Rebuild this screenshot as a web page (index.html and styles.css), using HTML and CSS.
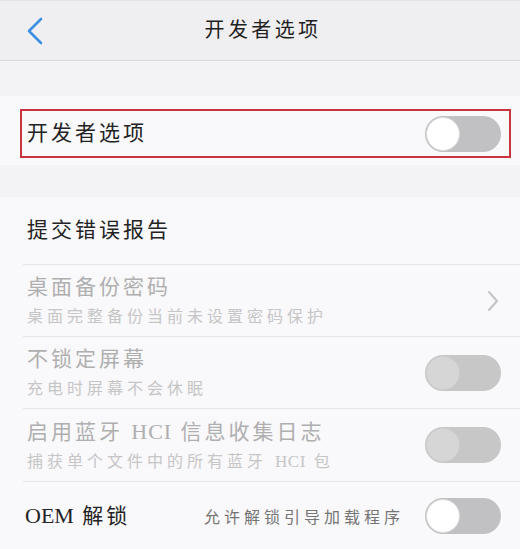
FILE: index.html
```html
<!DOCTYPE html>
<html lang="zh-CN">
<head>
<meta charset="utf-8">
<title>开发者选项</title>
<link rel="stylesheet" href="styles.css">
</head>
<body>
<div class="screen">
  <header class="topbar">
    <div class="back">
      <svg width="20" height="30" viewBox="0 0 20 30"><polyline points="15,3 3,15 15,27" fill="none" stroke="#3d8fe3" stroke-width="2.6" stroke-linecap="round" stroke-linejoin="round"/></svg>
    </div>
    <div class="title">开发者选项</div>
    <div class="spacer"></div>
  </header>
  <div class="band band-top"></div>
  <section class="master">
    <div class="master-box">
      <span class="label">开发者选项</span>
      <span class="switch"><span class="knob"></span></span>
    </div>
  </section>
  <div class="band band-mid"></div>
  <section class="list">
    <div class="item item-first">
      <span class="label">提交错误报告</span>
    </div>
    <div class="item item-two">
      <div class="texts disabled">
        <span class="label">桌面备份密码</span>
        <span class="sub">桌面完整备份当前未设置密码保护</span>
      </div>
      <svg class="chev" width="14" height="24" viewBox="0 0 14 24"><polyline points="3,3 11,12 3,21" fill="none" stroke="#c3c3c3" stroke-width="2" stroke-linecap="round" stroke-linejoin="round"/></svg>
    </div>
    <div class="item item-two">
      <div class="texts disabled">
        <span class="label">不锁定屏幕</span>
        <span class="sub">充电时屏幕不会休眠</span>
      </div>
      <span class="switch switch-off-disabled"><span class="knob"></span></span>
    </div>
    <div class="item item-two">
      <div class="texts disabled">
        <span class="label">启用蓝牙 <span class="latin-l">HCI</span> 信息收集日志</span>
        <span class="sub">捕获单个文件中的所有蓝牙 <span class="latin-s">HCI</span> 包</span>
      </div>
      <span class="switch switch-off-disabled"><span class="knob"></span></span>
    </div>
    <div class="item item-last">
      <span class="label"><span class="latin">OEM</span> 解锁</span>
      <span class="hint">允许解锁引导加载程序</span>
      <span class="switch"><span class="knob"></span></span>
    </div>
  </section>
</div>
</body>
</html>
```

FILE: styles.css
```css
html, body {
  margin: 0;
  padding: 0;
}
body {
  width: 520px;
  height: 549px;
  overflow: hidden;
  background: #f9f8fa;
  font-family: "Liberation Serif", "Noto Sans CJK SC", serif;
  color: #222;
}
.screen {
  display: flex;
  flex-direction: column;
  width: 520px;
  height: 549px;
}
.topbar {
  height: 59px;
  flex: none;
  display: grid;
  grid-template-columns: 80px 1fr 80px;
  align-items: center;
  background: #efeef0;
  border-bottom: 1px solid #d8d7d9;
  border-top: 1px solid #e4e4e6;
  box-sizing: content-box;
}
.back {
  padding-left: 26px;
  display: flex;
  align-items: center;
}
.title {
  text-align: center;
  font-size: 20px;
  letter-spacing: 3.4px;
  color: #1f1f1f;
  padding-left: 6px;
  margin-top: -4px;
}
.band {
  flex: none;
  background: #f3f2f4;
}
.band-top { height: 35px; }
.band-mid { height: 32px; }
.master {
  flex: none;
  background: #f9f8fa;
  padding: 13px 9px 7px 20px;
}
.master-box {
  height: 45px;
  border: 2px solid #c9343f;
  display: flex;
  align-items: center;
  justify-content: space-between;
  padding: 0 8px 0 5px;
}
.label {
  font-size: 21px;
  letter-spacing: 3px;
  line-height: 27px;
  color: #232323;
}
.latin {
  letter-spacing: 0;
  font-size: 22px;
}
.latin-l {
  letter-spacing: 1px;
  font-size: 22px;
}
.latin-s {
  letter-spacing: 0.5px;
  font-size: 17px;
}
.switch {
  flex: none;
  width: 76px;
  height: 36px;
  border-radius: 18px;
  background: #c1c1c3;
  display: flex;
  align-items: center;
  padding-left: 1px;
  box-sizing: border-box;
}
.knob {
  width: 34px;
  height: 34px;
  border-radius: 50%;
  background: #ffffff;
  box-sizing: border-box;
  border: 1px solid #d9d9d9;
}
.switch-off-disabled {
  background: #c7c7c8;
}
.switch-off-disabled .knob {
  background: #d6d6d7;
  border-color: #cfcfcf;
}
.list {
  flex: 1;
  background: #f9f8fa;
  padding-left: 23px;
  display: flex;
  flex-direction: column;
}
.item {
  display: flex;
  align-items: center;
  padding: 0 19px 0 4px;
  border-bottom: 1px solid #e5e4e6;
}
.item-first { height: 67px; }
.item-two { height: 71px; justify-content: space-between; }
.item-two:nth-child(4) { height: 72px; }
.item-last {
  flex: 1;
  border-bottom: none;
  padding-left: 2px;
}
.texts {
  display: flex;
  flex-direction: column;
  gap: 5px;
}
.texts.disabled .label {
  color: #afafb0;
}
.sub {
  font-size: 16px;
  letter-spacing: 4px;
  line-height: 22px;
  color: #c6c6c7;
}
.chev {
  margin-right: 1px;
}
.hint {
  font-size: 16px;
  letter-spacing: 4px;
  color: #757575;
  margin-left: auto;
  margin-right: 21px;
}
```
